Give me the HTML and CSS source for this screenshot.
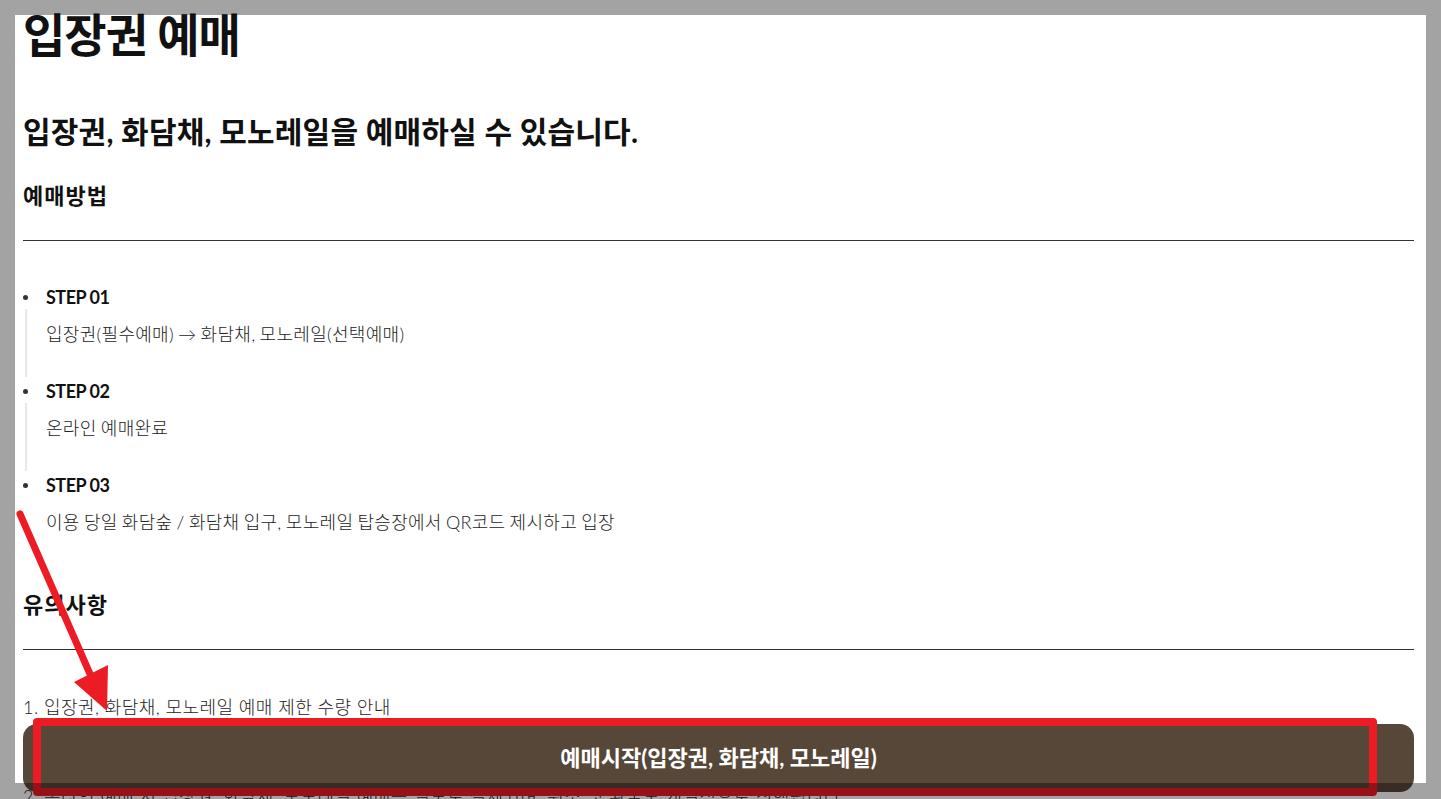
FILE: index.html
```html
<!DOCTYPE html>
<html lang="ko">
<head>
<meta charset="utf-8">
<title>입장권 예매</title>
<link rel="stylesheet" href="styles.css">
</head>
<body>
<main class="page">
  <h1 class="title">입장권 예매</h1>
  <p class="subtitle">입장권, 화담채, 모노레일을 예매하실 수 있습니다.</p>

  <section class="section">
    <h3 class="section-title">예매방법</h3>
    <hr class="rule">
    <ul class="steps">
      <li class="step">
        <span class="dot"></span>
        <strong class="step-title">STEP 01</strong>
        <p class="step-desc">입장권(필수예매) → 화담채, 모노레일(선택예매)</p>
      </li>
      <li class="step">
        <span class="dot"></span>
        <strong class="step-title">STEP 02</strong>
        <p class="step-desc">온라인 예매완료</p>
      </li>
      <li class="step step-last">
        <span class="dot"></span>
        <strong class="step-title">STEP 03</strong>
        <p class="step-desc">이용 당일 화담숲 / 화담채 입구, 모노레일 탑승장에서 QR코드 제시하고 입장</p>
      </li>
    </ul>
  </section>

  <section class="section section-notice">
    <h3 class="section-title">유의사항</h3>
    <hr class="rule">
    <p class="notice">1. 입장권, 화담채, 모노레일 예매 제한 수량 안내</p>
    <p class="notice notice-second">2. 온라인 예매 시 입장권, 화담채, 모노레일 예매는 별도로 결제되며, 취소 및 환불도 개별적으로 진행됩니다.</p>
  </section>
</main>

<button class="cta" type="button">예매시작(입장권, 화담채, 모노레일)</button>

<div class="mark-box"></div>
<svg class="mark-arrow" width="130" height="720" viewBox="0 0 130 720" aria-hidden="true">
  <line x1="20" y1="514" x2="90" y2="674" stroke="#ed1c24" stroke-width="7" stroke-linecap="round"/>
  <polygon points="74,682 108,665 107,711" fill="#ed1c24"/>
</svg>

<div class="dim-frame"></div>
</body>
</html>
```

FILE: styles.css
```css
html, body {
  margin: 0;
  height: 100%;
  overflow: hidden;
  background: #ffffff;
}

body {
  font-family: Lato, "Noto Sans CJK KR", sans-serif;
  color: #111111;
}

.page {
  padding: 0 27px 0 23px;
}

.title {
  margin: 0;
  font-size: 46px;
  line-height: 70px;
  font-weight: 700;
  letter-spacing: -1px;
}

.subtitle {
  margin: 41px 0 0;
  font-size: 30px;
  line-height: 40px;
  font-weight: 700;
  letter-spacing: 0.2px;
}

.section {
  margin-top: 30px;
}

.section-notice {
  margin-top: 56px;
}

.section-title {
  margin: 0;
  font-size: 22px;
  line-height: 30px;
  font-weight: 700;
  letter-spacing: 1px;
}

.rule {
  margin: 29px 0 0;
  border: 0;
  border-top: 1px solid #333333;
  height: 0;
}

.steps {
  list-style: none;
  margin: 44px 0 0;
  padding: 0;
  display: flex;
  flex-direction: column;
  gap: 2px;
}

.step {
  display: grid;
  grid-template-columns: 23px 1fr;
  align-items: center;
}

.dot {
  width: 5px;
  height: 5px;
  border-radius: 50%;
  background: #333333;
}

.step-title {
  font-size: 18px;
  line-height: 24px;
  font-weight: 700;
  letter-spacing: -0.5px;
}

.step-desc {
  grid-column: 1 / 3;
  margin: 0 0 0 2px;
  padding: 13px 0 31px 19px;
  border-left: 2px solid #e8e8e8;
  font-size: 18px;
  line-height: 24px;
  font-weight: 300;
  color: #222222;
  letter-spacing: 0.3px;
  word-spacing: -1px;
}

.step-last .step-desc {
  border-left-color: transparent;
  padding-bottom: 0;
}

.notice {
  margin: 45px 0 0;
  font-size: 18px;
  line-height: 24px;
  font-weight: 300;
  color: #222222;
  letter-spacing: 0.45px;
}

.notice-second {
  margin-top: 65px;
}

.cta {
  position: fixed;
  left: 23px;
  right: 27px;
  bottom: 7px;
  height: 68px;
  padding: 0 0 5px;
  border: 0;
  border-radius: 14px;
  background: #564739;
  color: #ffffff;
  font-family: Lato, "Noto Sans CJK KR", sans-serif;
  font-size: 22px;
  font-weight: 700;
  letter-spacing: 0;
}

.mark-box {
  position: absolute;
  left: 33px;
  top: 718px;
  width: 1344px;
  height: 78px;
  box-sizing: border-box;
  border: 8px solid #ed1c24;
  border-radius: 4px;
}

.mark-arrow {
  position: absolute;
  left: 0;
  top: 0;
}

.dim-frame {
  position: fixed;
  top: 15px;
  left: 15px;
  right: 15px;
  bottom: 16px;
  box-shadow: 0 0 0 2000px rgba(0, 0, 0, 0.36);
  pointer-events: none;
}
```
